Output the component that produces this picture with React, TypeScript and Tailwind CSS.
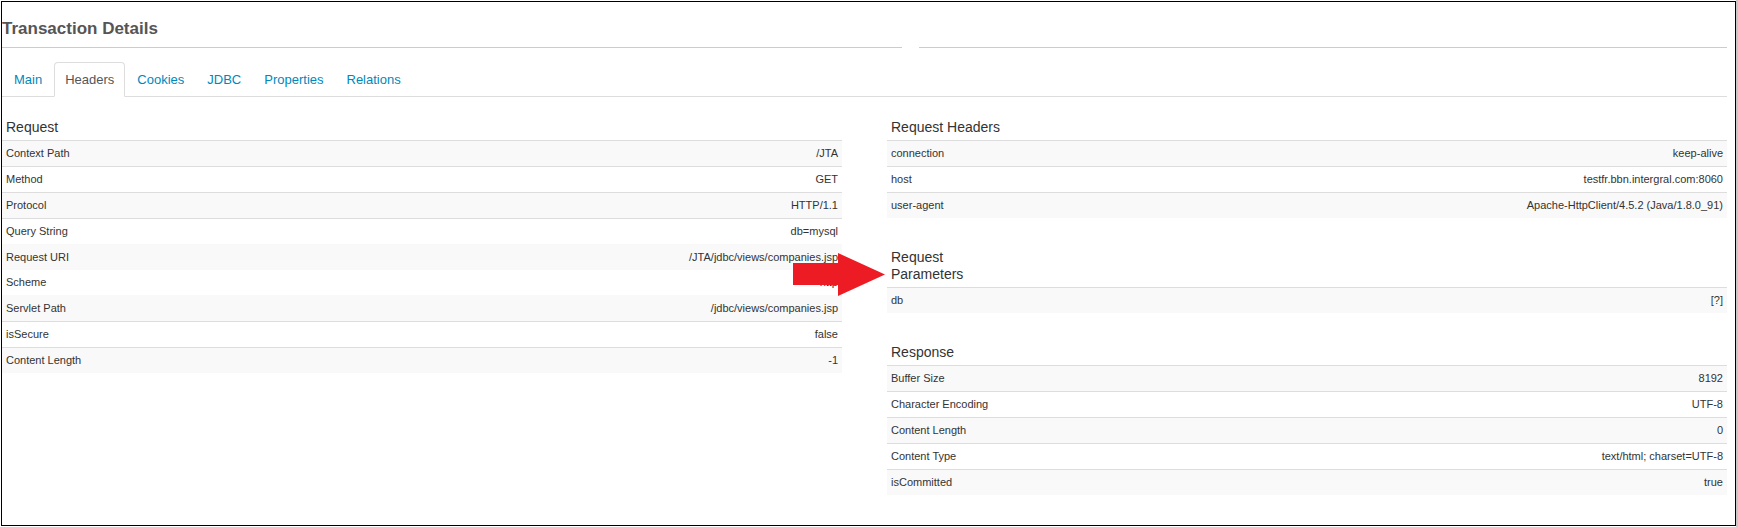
import React from "react";

type Row = { name: string; value: string; rule?: "hidden" | "none" };

const request: Row[] = [
  { name: "Context Path", value: "/JTA" },
  { name: "Method", value: "GET" },
  { name: "Protocol", value: "HTTP/1.1" },
  { name: "Query String", value: "db=mysql" },
  { name: "Request URI", value: "/JTA/jdbc/views/companies.jsp", rule: "hidden" },
  { name: "Scheme", value: "http", rule: "none" },
  { name: "Servlet Path", value: "/jdbc/views/companies.jsp", rule: "hidden" },
  { name: "isSecure", value: "false" },
  { name: "Content Length", value: "-1" },
];

const requestHeaders: Row[] = [
  { name: "connection", value: "keep-alive" },
  { name: "host", value: "testfr.bbn.intergral.com:8060" },
  { name: "user-agent", value: "Apache-HttpClient/4.5.2 (Java/1.8.0_91)" },
];

const requestParameters: Row[] = [{ name: "db", value: "[?]" }];

const response: Row[] = [
  { name: "Buffer Size", value: "8192" },
  { name: "Character Encoding", value: "UTF-8" },
  { name: "Content Length", value: "0" },
  { name: "Content Type", value: "text/html; charset=UTF-8" },
  { name: "isCommitted", value: "true" },
];

const tabs = ["Main", "Headers", "Cookies", "JDBC", "Properties", "Relations"];

const rules = {
  hidden: "border-t border-transparent",
  none: "",
  shown: "border-t border-[#dddddd]",
};

function DetailTable({ title, rows }: { title: string; rows: Row[] }) {
  return (
    <table className="w-full table-fixed border-separate border-spacing-0 text-[11px] leading-[17px] text-[#333333]">
      <thead>
        <tr>
          <th scope="col" className="w-[15%] p-1 text-left align-bottom text-[14px] leading-[17px] font-normal">
            {title}
          </th>
          <td className="p-1" />
        </tr>
      </thead>
      <tbody>
        {rows.map((row) => (
          <tr key={row.name} className="odd:bg-[#f9f9f9]">
            <th scope="row" className={`p-1 text-left font-normal ${rules[row.rule ?? "shown"]}`}>
              {row.name}
            </th>
            <td className={`p-1 text-right ${rules[row.rule ?? "shown"]}`}>{row.value}</td>
          </tr>
        ))}
      </tbody>
    </table>
  );
}

function Arrow() {
  return (
    <svg
      viewBox="0 0 92 43"
      className="absolute top-[138px] -right-[43px] h-[43px] w-[92px]"
      fill="#ed1c24"
      aria-hidden="true"
    >
      <path d="M0 10H45V0L92 21.5L45 43V32H0Z" />
    </svg>
  );
}

export default function App() {
  return (
    <div className="flex min-h-screen flex-col border-r-2 border-[#c8c8c8] bg-white pt-px pb-px pl-px font-['Liberation_Sans',Arial,sans-serif]">
      <main className="flex-1 border border-black pr-2">
        <header className="flex gap-[17px]">
          <h1 className="flex-[900] border-b border-[#cccccc] pt-4 pb-2 text-[17px] leading-[21px] font-bold text-[#555555]">
            Transaction Details
          </h1>
          <div className="flex-[808] border-b border-[#cccccc]" />
        </header>
        <nav className="mt-[14px] flex gap-px border-b border-[#dddddd] pl-px text-[13px] leading-[17px]">
          {tabs.map((tab) =>
            tab === "Headers" ? (
              <a
                key={tab}
                href="#headers"
                aria-current="page"
                className="-mb-px rounded-t border border-b-white border-[#dddddd] bg-white px-[10px] py-2 text-[#555555]"
              >
                {tab}
              </a>
            ) : (
              <a key={tab} href={`#${tab.toLowerCase()}`} className="px-[11px] pt-[9px] pb-2 text-[#0088bb]">
                {tab}
              </a>
            ),
          )}
        </nav>
        <div className="grid grid-cols-2 items-start gap-[45px] pt-[18px]">
          <section className="relative">
            <DetailTable title="Request" rows={request} />
            <Arrow />
          </section>
          <section className="flex flex-col gap-[27px]">
            <DetailTable title="Request Headers" rows={requestHeaders} />
            <DetailTable title="Request Parameters" rows={requestParameters} />
            <DetailTable title="Response" rows={response} />
          </section>
        </div>
      </main>
    </div>
  );
}
